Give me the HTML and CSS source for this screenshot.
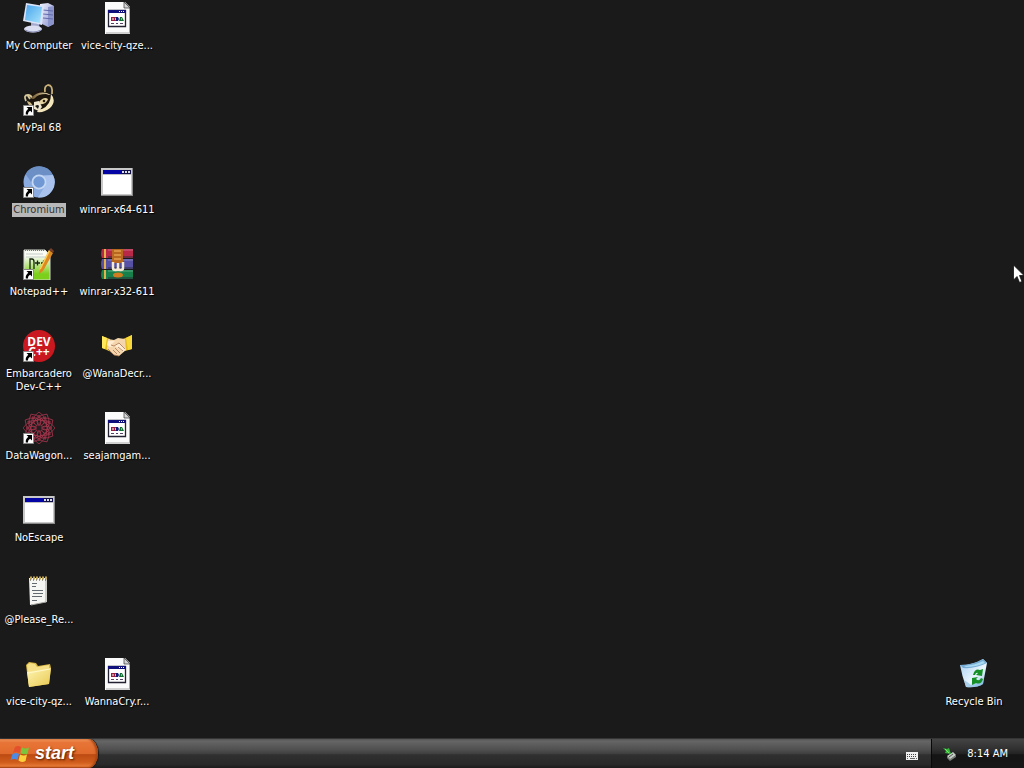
FILE: index.html
```
<!DOCTYPE html>
<html lang="en">
<head>
    <meta charset="UTF-8">
    <meta name="viewport" content="width=device-width, initial-scale=1.0">
    <title>Desktop</title>
    <link rel="stylesheet" href="styles.css">
</head>
<body>
    <!-- shared icon shapes -->
    <svg class="defs" width="0" height="0" aria-hidden="true">
        <defs>
            <symbol id="file" viewBox="0 0 32 32">
                <path d="M4 0h20l5 5v27H4z" fill="#fbfbfb"/>
                <path d="M5 31h24M28.500 6v25" stroke="#a8a8a8" fill="none"/>
                <path d="M23 0v6h6z" fill="#d4d4d4" stroke="#333" stroke-width=".7"/>
                <path d="M7.500 8.500h17v16h-17z" fill="#fff" stroke="#223" stroke-width="1.300"/>
                <path d="M7 8h18v3H7z" fill="#10107c"/>
                <path d="M18 9h1v1h-1zM20 9h1v1h-1zM22 9h1v1h-1z" fill="#fff"/>
                <path d="M10 15h4v4h-4z" fill="#98203c"/>
                <path d="M14 15h3l1 2-1 2h-3l1-2z" fill="#101878"/>
                <path d="M18 19l1-4h2l2 4z" fill="#107030"/>
                <path d="M12 16v2M20 17h1" stroke="#fff"/>
                <path d="M10 21.500h3M15 21.500h2M19 21.500h3" stroke="#546"/>
            </symbol>
            <symbol id="app" viewBox="0 0 32 32">
                <path d="M0 2h32v28H0z" fill="#8a8a8a"/>
                <path d="M0 2h31v27H0z" fill="#c8c8c8"/>
                <path d="M2 4h28v24H2z" fill="#fff"/>
                <path d="M2 4h28v4H2z" fill="#0404a4"/>
                <path d="M20 4h10v4H20z" fill="#101048"/>
                <path d="M21 5h2v2h-2zM24 5h2v2h-2zM27 5h2v2h-2z" fill="#dcdce8"/>
                <path d="M2 8.500h28" stroke="#c0c0c0"/>
            </symbol>
            <symbol id="arrow" viewBox="0 0 11 11">
                <path d="M.500.500h10v10H.500z" fill="#fff" stroke="#888"/>
                <path d="M3.500 2H9v5.500L7.200 5.700C5.500 6.700 5 7.700 5 9.500H2.800C2.400 7 3.500 5.200 5.300 3.800z" fill="#000"/>
            </symbol>
            <linearGradient id="screen" x1="0" y1="0" x2="1" y2="1">
                <stop offset="0" stop-color="#48a4ec"/>
                <stop offset="1" stop-color="#a8e4fc"/>
            </linearGradient>
            <linearGradient id="case" x1="0" y1="0" x2="1" y2="1">
                <stop offset="0" stop-color="#f0f2ff"/>
                <stop offset="1" stop-color="#8890cc"/>
            </linearGradient>
            <linearGradient id="notepad" x1="0" y1="0" x2="0" y2="1">
                <stop offset=".2" stop-color="#fafcf4"/>
                <stop offset=".8" stop-color="#7cd01c"/>
            </linearGradient>
            <linearGradient id="folder" x1="0" y1="0" x2="1" y2="1">
                <stop offset="0" stop-color="#fff6b4"/>
                <stop offset="1" stop-color="#e8c850"/>
            </linearGradient>
            <linearGradient id="bin" x1="0" y1="0" x2="1" y2="1">
                <stop offset="0" stop-color="#a4cdf0"/>
                <stop offset=".6" stop-color="#eaf6fe"/>
                <stop offset="1" stop-color="#7cb4e0"/>
            </linearGradient>
            <linearGradient id="fur" x1="0" y1="0" x2="1" y2="0">
                <stop offset="0" stop-color="#6e5428"/>
                <stop offset="1" stop-color="#f4e8c4"/>
            </linearGradient>
        </defs>
    </svg>

    <main class="desktop">
        <button class="icon" type="button">
            <svg class="icon-image" viewBox="0 0 32 32">
                <path d="M17 2l8-1 6 3v18l-6 3-8-4z" fill="url(#case)"/>
                <path d="M25 5l6-1v18l-6 3z" fill="#8c94cc"/>
                <path d="M20 8l10 1M20 12l10 1M20 16l10 1" stroke="#626cac"/>
                <path d="M8 20l8 2 1 5h-9z" fill="#a4a8cc"/>
                <ellipse cx="10" cy="27" rx="9" ry="3.500" fill="#dcdef2"/>
                <path d="M2 28q8 4 16 0" stroke="#8890b8" fill="none"/>
                <path d="M3 1l18 3-2 19L0 19z" fill="#dce4fa"/>
                <path d="M4 3l15 2-2 16L2 18z" fill="url(#screen)"/>
            </svg>
            <span class="icon-label">My Computer</span>
        </button>
        <button class="icon" type="button">
            <svg class="icon-image"><use href="#file"/></svg>
            <span class="icon-label">vice-city-qze...</span>
        </button>

        <button class="icon row-2" type="button">
            <svg class="icon-image" viewBox="0 0 32 32">
                <path d="M5 13q5-7 14-6l7 1q5 6 1 13-7 6-16 5l-5-6z" fill="#1c150d"/>
                <path d="M22 8q-1-6 3-7 5 0 4 9" fill="none" stroke="#c8b078" stroke-width="1.800"/>
                <path d="M3 17q-3-6 2-6 3 0 4 3M5 12l2 3" fill="none" stroke="#d8c898" stroke-width="1.800"/>
                <path d="M8 14q9-9 20-3-3 0-5-1-8 0-11 4-2 2-4 0z" fill="url(#fur)"/>
                <path d="M28 10q6 7-1 14-6 5-13 4 1-3 5-3 9-4 9-15z" fill="#f4e7bd"/>
                <path d="M4 17q5 1 6 6-5-1-6-6z" fill="#cdb784"/>
                <path d="M16 18q5-6 9-3-2 6-8 5z" fill="#e4d3a0"/>
                <circle cx="21" cy="17" r="1.300" fill="#2a1d10"/>
                <path d="M11 18l5-1 3 6-3 4-5-2z" fill="#efe6d0"/>
                <path d="M12 22q3-2 4 0l-1 3z" fill="#1b1918"/>
                <use href="#arrow" x="0" y="21" width="11" height="11"/>
            </svg>
            <span class="icon-label">MyPal 68</span>
        </button>

        <button class="icon row-3 selected" type="button">
            <svg class="icon-image" viewBox="0 0 32 32">
                <circle cx="16" cy="16" r="15.500" fill="#8aace0"/>
                <path d="M2.600 8.200A15.500 15.500 0 0 1 30 9H16a7 7 0 0 0-6.500 9z" fill="#6c90c6"/>
                <path d="M30 9a15.500 15.500 0 0 1-15 22.500L22 20a7 7 0 0 0-2-10z" fill="#a9c3ee"/>
                <circle cx="16" cy="16" r="7.500" fill="#c5d8f3"/>
                <circle cx="16" cy="16" r="5.700" fill="#6f98d4"/>
                <use href="#arrow" x="0" y="21" width="11" height="11"/>
            </svg>
            <span class="icon-label">Chromium</span>
        </button>
        <button class="icon row-3" type="button">
            <svg class="icon-image"><use href="#app"/></svg>
            <span class="icon-label">winrar-x64-611</span>
        </button>

        <button class="icon row-4" type="button">
            <svg class="icon-image" viewBox="0 0 32 32">
                <path d="M1 2h21l5 5v25H1z" fill="url(#notepad)" stroke="#d4d8d0"/>
                <path d="M2 2h20" stroke="#777" stroke-width="2" stroke-dasharray="1 1"/>
                <path d="M3 6h17M3 9h20" stroke="#c4cec8"/>
                <path d="M7 21v-10h2q2 0 2 3v7M12 15h5M14.500 12.500v5M18 15h5M20.500 12.500v5" fill="none" stroke="#172712" stroke-width="1.300"/>
                <path d="M26 2l4 3-10 18-4 3 1-5z" fill="#de8820"/>
                <path d="M26 2l1 1-9 18-2 1z" fill="#ffcf54"/>
                <path d="M26 2l2-2 3 3-1 2z" fill="#7a3f29"/>
                <use href="#arrow" x="0" y="21" width="11" height="11"/>
            </svg>
            <span class="icon-label">Notepad++</span>
        </button>
        <button class="icon row-4" type="button">
            <svg class="icon-image" viewBox="0 0 32 32">
                <path d="M1 1h31v9H1q-2-4 0-9z" fill="#b82948"/>
                <path d="M1 11h31v10H1q-2-5 0-10z" fill="#5651a5"/>
                <path d="M1 22h31v9H1q-2-4 0-9z" fill="#16814b"/>
                <path d="M7 8h25v2H7zM7 19h25v2H7zM7 29h25v2H7z" fill="#2b2d38" opacity=".5"/>
                <path d="M7 2h25M7 12h25M7 23h25" stroke="#fff" opacity=".3"/>
                <path d="M4 1v9M4 11v10M4 22v9" stroke="#e2b34c" stroke-width="2"/>
                <path d="M11 1h11v14H11z" fill="#b86720"/>
                <path d="M13 3h7M13 7h7M13 11h7" stroke="#e4a04c" stroke-width="1.500"/>
                <path d="M12 14v6q0 2 2.500 2t2.500-2v-5M17 20q0 2 2.500 2t2.500-2v-6" fill="none" stroke="#f4ead4" stroke-width="2.500"/>
                <ellipse cx="17" cy="27" rx="5" ry="2.500" fill="#d07c20"/>
            </svg>
            <span class="icon-label">winrar-x32-611</span>
        </button>

        <button class="icon row-5" type="button">
            <svg class="icon-image" viewBox="0 0 32 32">
                <circle cx="16" cy="16" r="16" fill="#c91820"/>
                <text class="dev-text" y="16"><tspan x="16">DEV</tspan><tspan x="16" dy="10">C++</tspan></text>
                <use href="#arrow" x="0" y="21" width="11" height="11"/>
            </svg>
            <span class="icon-label">Embarcadero<br>Dev-C++</span>
        </button>
        <button class="icon row-5" type="button">
            <svg class="icon-image" viewBox="0 0 32 32">
                <path d="M1 6l8 3-1 12-7-3z" fill="#e4bd22"/>
                <path d="M1 6l5 2-2 11-3-1z" fill="#ffe85c"/>
                <path d="M31 5l-9 4 2 12 7-2z" fill="#e4bb20"/>
                <path d="M31 5l-6 3 2 12 4-1z" fill="#f7d838"/>
                <path d="M7 9l6 1 4-2 7 1 1 11-7 6-5-1-7-6z" fill="#f4d5ac"/>
                <path d="M7 11l7 0-4 4 3 1 5-3 7 6-3 3-8-6-5 1-3-2z" fill="#ffebcf"/>
                <path d="M10 15l3 1 5-3 6 6M7 19l6 6 5 1M12 20l4 4M14 18l5 5M17 17l5 4" fill="none" stroke="#a97553" stroke-width=".8"/>
            </svg>
            <span class="icon-label">@WanaDecr...</span>
        </button>

        <button class="icon row-6" type="button">
            <svg class="icon-image" viewBox="0 0 32 32">
                <g fill="none" stroke="#a0344a" stroke-width=".8">
                    <g id="petals">
                        <path d="M16 16Q4 8 16 0q12 8 0 16M9 12L16 3l7 9"/>
                        <path d="M16 16Q4 8 16 0q12 8 0 16M9 12L16 3l7 9" transform="rotate(60 16 16)"/>
                        <path d="M16 16Q4 8 16 0q12 8 0 16M9 12L16 3l7 9" transform="rotate(120 16 16)"/>
                        <path d="M16 16Q4 8 16 0q12 8 0 16M9 12L16 3l7 9" transform="rotate(180 16 16)"/>
                        <path d="M16 16Q4 8 16 0q12 8 0 16M9 12L16 3l7 9" transform="rotate(240 16 16)"/>
                        <path d="M16 16Q4 8 16 0q12 8 0 16M9 12L16 3l7 9" transform="rotate(300 16 16)"/>
                    </g>
                    <use href="#petals" transform="rotate(30 16 16)"/>
                </g>
                <circle cx="16" cy="16" r="2.500" fill="#281d20"/>
                <use href="#arrow" x="0" y="21" width="11" height="11"/>
            </svg>
            <span class="icon-label">DataWagon...</span>
        </button>
        <button class="icon row-6" type="button">
            <svg class="icon-image"><use href="#file"/></svg>
            <span class="icon-label">seajamgam...</span>
        </button>

        <button class="icon row-7" type="button">
            <svg class="icon-image"><use href="#app"/></svg>
            <span class="icon-label">NoEscape</span>
        </button>

        <button class="icon row-8" type="button">
            <svg class="icon-image" viewBox="0 0 32 32">
                <path d="M6 2h18v24L7 29z" fill="#f6f6f4"/>
                <path d="M23 3v23L8 29" stroke="#a4a4a0" fill="none"/>
                <path d="M7 2h17" stroke="#c3a650" stroke-width="3" stroke-dasharray="2 1"/>
                <path d="M7 4h17" stroke="#463e29" stroke-dasharray="1 2"/>
                <path d="M9 7.500h5M9 10.500h4M9 14.500h11M10 17.500h10M9 20.500h10M9 24.500h5" stroke="#646b70"/>
            </svg>
            <span class="icon-label">@Please_Re...</span>
        </button>

        <button class="icon row-9" type="button">
            <svg class="icon-image" viewBox="0 0 32 32">
                <path d="M3 7l3-3 7 1 2 3 12-2 1 4-2 16-20 3z" fill="#d8b53f"/>
                <path d="M4 7l3-2 5 1 2 3 12-2v17L6 28z" fill="#f5df87"/>
                <path d="M4 14l24-4-2 16-20 3z" fill="url(#folder)"/>
                <path d="M5 15l22-4" stroke="#fff9cb" fill="none"/>
            </svg>
            <span class="icon-label">vice-city-qz...</span>
        </button>
        <button class="icon row-9" type="button">
            <svg class="icon-image"><use href="#file"/></svg>
            <span class="icon-label">WannaCry.r...</span>
        </button>
        <button class="icon row-9 recycle" type="button">
            <svg class="icon-image" viewBox="0 0 32 32">
                <path d="M2 7q14 0 23-6l4 4-4 21q-6 4-17 3Q4 18 2 7z" fill="url(#bin)"/>
                <path d="M2 7q12 0 23-6l4 4Q17 11 5 10z" fill="#76acd4"/>
                <path d="M6 8q12-1 19-5l2 2q-9 4-19 4z" fill="#a9daf3"/>
                <path d="M6 22q5 3 7 5l8-4 5-3-1 6q-6 4-17 3z" fill="#80b9df" opacity=".6"/>
                <path d="M15 17q2-7 7-5l3-1-1 7-6-1 2-2q-2-1-3 2zM14 20l6-1-2 2q3 3 5-1l2 1q-2 6-7 4l-4 2z" fill="#158f26"/>
            </svg>
            <span class="icon-label">Recycle Bin</span>
        </button>

        <svg class="cursor" viewBox="0 0 12 20" aria-hidden="true">
            <path d="M1.500 1v15l3.500-3.500 2.500 6 2.500-1-2.500-6H12z" fill="#fff" stroke="#111" stroke-width=".8"/>
        </svg>
    </main>

    <footer class="taskbar">
        <button class="start" type="button">
            <svg class="flag" viewBox="0 0 20 20" aria-hidden="true">
                <path d="M5 3q3-2 6 0L9.500 9q-3-2-6.500 0z" fill="#e4502b"/>
                <path d="M12 3.500q3 2 7 0L17.500 10q-4 1-7-1z" fill="#7cc43b"/>
                <path d="M2.500 10q3.500-2 6.500 0l-1.500 6q-3-2-7 0z" fill="#4b8be6"/>
                <path d="M10 10.500q4 2 7 0L15.500 17q-4 2-7-.500z" fill="#fcd03c"/>
            </svg>
            <span>start</span>
        </button>
        <button class="keyboard" type="button" aria-label="Keyboard">
            <svg viewBox="0 0 14 14" aria-hidden="true">
                <path d="M3 1l2 1 2-1 2 1h3" fill="none" stroke="#555"/>
                <path d="M1 5h12v8H1z" fill="#f0f0f0"/>
                <path d="M2 7.500h10M2 9.500h10" stroke="#444" stroke-dasharray="1 1"/>
                <path d="M2 11.500h1M5 11.500h5M11 11.500h1" stroke="#666"/>
            </svg>
        </button>
        <div class="tray">
            <button class="device" type="button" aria-label="Safely Remove Hardware">
                <svg viewBox="0 0 16 16" aria-hidden="true">
                    <path d="M5 10l6-4 3 3-6 5z" fill="#c6cbc5"/>
                    <path d="M5 10l3 3 6-4v2l-6 4-3-3z" fill="#777e77"/>
                    <path d="M7 11l4-3" stroke="#4d574d"/>
                    <path d="M1 2l4 1 2-1 2 6-6-1 1-2z" fill="#35b93b"/>
                    <path d="M3 3l4 4" stroke="#85e172"/>
                </svg>
            </button>
            <time>8:14 AM</time>
        </div>
    </footer>
</body>
</html>
```
FILE: styles.css
```
* {
    box-sizing: border-box;
}
body {
    display: flex;
    flex-direction: column;
    min-height: 100vh;
    margin: 0;
    background-color: #1a1a1a;
    color: #fff;
    font-family: "DejaVu Sans Condensed", "Noto Sans", sans-serif;
    font-size: 11px;
}
button {
    margin: 0;
    padding: 0;
    border: none;
    background: none;
    color: inherit;
    font: inherit;
}
.defs {
    position: absolute;
}
.desktop {
    position: relative;
    flex: 1;
    display: grid;
    grid-template-columns: 78px 78px 1fr 78px;
    grid-template-rows: repeat(9, 1fr);
    padding-right: 11px;
}
.icon {
    display: flex;
    flex-direction: column;
    align-items: center;
    justify-content: flex-start;
    gap: 5px;
    padding-top: 2px;
    line-height: 13px;
}
.icon-image {
    flex: none;
    width: 32px;
    height: 32px;
}
.icon-label {
    padding: 0 1px 1px;
    text-shadow: 1px 1px 1px #000;
    white-space: nowrap;
}
.selected .icon-label {
    background-color: #b8b8b8;
    color: #333;
    text-shadow: none;
}
.row-2 { grid-row: 2; }
.row-3 { grid-row: 3; }
.row-4 { grid-row: 4; }
.row-5 { grid-row: 5; }
.row-6 { grid-row: 6; }
.row-7 { grid-row: 7; }
.row-8 { grid-row: 8; }
.row-9 { grid-row: 9; }
.recycle {
    grid-column: 4;
}
.dev-text {
    fill: #fff;
    font-family: "Noto Sans", sans-serif;
    font-size: 12px;
    font-weight: bold;
    text-anchor: middle;
}
.cursor {
    position: absolute;
    top: 264px;
    right: 0;
    width: 12px;
    height: 20px;
}
.taskbar {
    display: flex;
    height: 30px;
    border-top: 1px solid #353535;
    background: linear-gradient(#555 0, #656565 8%, #515151 35%, #3e3e3e 52%, #303030 54%, #292929 88%, #1c1c1c);
}
.start {
    display: flex;
    align-items: center;
    gap: 5px;
    width: 98px;
    margin-right: auto;
    padding-left: 10px;
    border-radius: 0 10px 10px 0 / 0 15px 15px 0;
    background: linear-gradient(#f29a60 0, #e87538 12%, #e06a2b 50%, #bd4b12 54%, #cf5c1c 80%, #e57934 94%, #9b3b0d);
    box-shadow: inset -2px 0 2px #a84614, 1px 0 1px #181818;
    font-family: "Liberation Sans", Arial, sans-serif;
    font-size: 18px;
    font-weight: bold;
    font-style: italic;
    text-shadow: 1px 1px 2px #522000;
}
.flag {
    width: 20px;
    height: 20px;
}
.keyboard {
    width: 14px;
    margin-right: 12px;
}
.keyboard svg {
    display: block;
    width: 14px;
    height: 14px;
}
.tray {
    display: flex;
    align-items: center;
    gap: 9px;
    padding: 0 16px 0 10px;
    border-left: 1px solid #080808;
    background: linear-gradient(#444 0, #303030 35%, #222 52%, #151515 54%, #161616);
}
.device svg {
    display: block;
    width: 16px;
    height: 16px;
}
```
